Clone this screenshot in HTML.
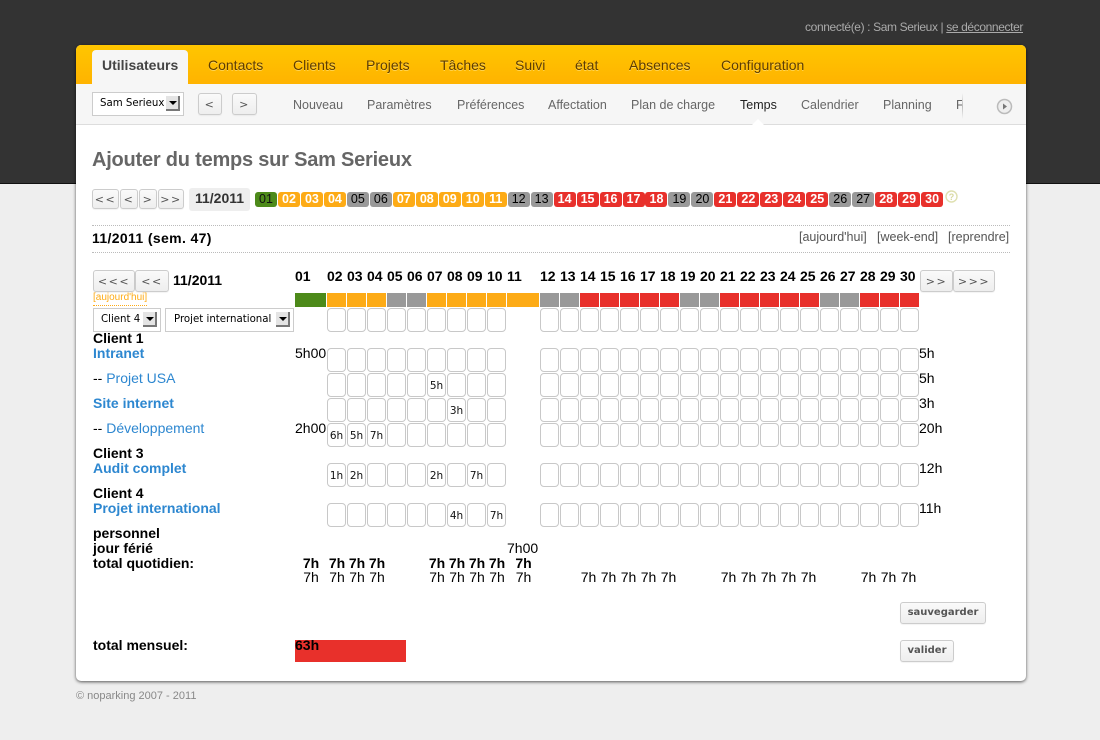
<!DOCTYPE html>
<html lang="fr"><head><meta charset="utf-8"><title>Temps</title>
<style>
html,body{margin:0;padding:0;width:1100px;height:740px;overflow:hidden;background:#eee;font-family:"Liberation Sans",sans-serif;color:#000}
*{box-sizing:border-box}
.top{position:absolute;left:0;top:0;width:1100px;height:184px;background:#333;border-bottom:1px solid #111}
.card{position:absolute;left:76px;top:45px;width:950px;height:636px;background:#fff;border-radius:5px;box-shadow:0 1px 3px rgba(0,0,0,.65)}
.bar{position:absolute;left:76px;top:45px;width:950px;height:39px;border-radius:5px 5px 0 0;background:linear-gradient(#ffc600,#ffb300)}
.sub{position:absolute;left:76px;top:84px;width:950px;height:41px;background:#f6f6f6;border-bottom:1px solid #ddd}
.active{position:absolute;left:92px;top:50px;width:96px;height:34px;background:#f6f6f6;border-radius:4px 4px 0 0}
.t{position:absolute;white-space:nowrap;line-height:16px;font-size:14px}
.b{font-weight:bold}
.tab{color:#5f3d00;text-shadow:0 1px 0 rgba(255,230,140,.6);top:57px}
.nav{color:#666;font-size:12.5px;top:97px}
.blue{color:#2d87d0}
.btn{position:absolute;background:linear-gradient(#fafafa,#eee);border:1px solid #ccc;border-radius:3px;color:#555;font:11px/1 "DejaVu Sans",sans-serif;display:flex;align-items:center;justify-content:center;letter-spacing:1.5px;box-shadow:0 1px 1px rgba(0,0,0,.05)}
.sel{position:absolute;background:#fff;border:1px solid #ccc;font:10.2px/22px "DejaVu Sans",sans-serif;color:#000;white-space:nowrap}
.sel u{position:absolute;right:3px;top:3px;width:14px;height:15px;background:#e4e4e4;border-right:2px solid #777;border-bottom:2px solid #777;text-decoration:none}
.sel u:after{content:"";position:absolute;left:3px;top:5px;border:4px solid transparent;border-top:4px solid #000;border-bottom:0}
.months{position:absolute;left:255px;top:192px;display:flex}
.months span{width:22px;height:15px;margin-right:.97px;border-radius:3px;font:bold 12.5px/15px "Liberation Sans",sans-serif;color:#fff;text-align:center;flex:none}
.months .mo{background:#fdab16}.months .mr{background:#e8302b}
.months .mg{background:#999;color:#000;font-weight:normal}
.months .mv{background:#4d8a1a;color:#111;font-weight:normal}
.dot{position:absolute;left:92px;width:918px;border-top:1px dotted #bbb;height:0}
.g{position:absolute;left:295px;width:625px;display:grid;grid-template-columns:32px repeat(9,20px) 33px repeat(19,20px)}
.bars{top:293px;height:14px}
.bars s{display:block;height:14px;margin-right:1px}
.G{background:#4d8a1a}.O{background:#fdab16}.A{background:#999}.R{background:#e8302b}
.row{height:24px}
.row i{display:block;width:19px;height:24px;border:1px solid #c8c8c8;border-radius:4px;font:normal 10.5px/24px "DejaVu Sans",sans-serif;text-align:center;color:#111}
.row b{display:block}
.hd{top:268px;font-size:14px;font-weight:bold;line-height:16px}
.tot{font-size:14px;line-height:16px;text-align:center}
.tot span{display:block}
</style></head><body>
<div class="top"></div>
<div class="t" style="right:77px;top:19px;font-size:12px;letter-spacing:-.38px;color:#aaa">connecté(e) : Sam Serieux | <span style="text-decoration:underline">se déconnecter</span></div>
<div class="card"></div><div class="bar"></div><div class="sub"></div><div class="active"></div>
<div class="t b" style="left:102px;top:57px;color:#444">Utilisateurs</div>
<div class="t tab" style="left:208px">Contacts</div><div class="t tab" style="left:293px">Clients</div><div class="t tab" style="left:366px">Projets</div><div class="t tab" style="left:440px">Tâches</div><div class="t tab" style="left:515px">Suivi</div><div class="t tab" style="left:575px">état</div><div class="t tab" style="left:629px">Absences</div><div class="t tab" style="left:721px">Configuration</div>

<div class="sel" style="left:92px;top:92px;width:92px;height:24px;padding-left:7px">Sam Serieux<u></u></div>
<div class="btn" style="left:198px;top:93px;width:24px;height:22px">&lt;</div>
<div class="btn" style="left:232px;top:93px;width:25px;height:22px">&gt;</div>
<div class="t nav" style="left:293px">Nouveau</div><div class="t nav" style="left:367px">Paramètres</div><div class="t nav" style="left:457px">Préférences</div><div class="t nav" style="left:548px">Affectation</div><div class="t nav" style="left:631px">Plan de charge</div><div class="t nav" style="left:740px;color:#222">Temps</div><div class="t nav" style="left:801px">Calendrier</div><div class="t nav" style="left:883px">Planning</div>
<div class="t nav" style="left:956px;width:6px;overflow:hidden">Facturation</div>
<div style="position:absolute;left:962px;top:93px;width:1px;height:26px;background:linear-gradient(rgba(190,190,190,0),#bbb 50%,rgba(190,190,190,0))"></div>
<svg style="position:absolute;left:996px;top:98px" width="17" height="17" viewBox="0 0 17 17"><circle cx="8.5" cy="8.5" r="7" fill="#eee" stroke="#bbb" stroke-width="1.5"/><path d="M7 5.5l4 3-4 3z" fill="#777"/></svg>
<div style="position:absolute;left:752px;top:119px;width:0;height:0;border:6px solid transparent;border-top:0;border-bottom:6px solid #fff"></div>

<div class="t b" style="left:92px;top:149px;font-size:20px;line-height:23px;letter-spacing:-.22px;color:#666">Ajouter du temps sur Sam Serieux</div>

<div class="btn" style="left:92px;top:189px;width:27px;height:20px">&lt;&lt;</div>
<div class="btn" style="left:120px;top:189px;width:18px;height:20px">&lt;</div>
<div class="btn" style="left:139px;top:189px;width:18px;height:20px">&gt;</div>
<div class="btn" style="left:158px;top:189px;width:26px;height:20px">&gt;&gt;</div>
<div class="t b" style="left:189px;top:188px;width:61px;height:23px;background:#eee;border-radius:3px;font-size:14px;line-height:21px;text-align:center;color:#333">11/2011</div>
<div class="months"><span class="mv">01</span><span class="mo">02</span><span class="mo">03</span><span class="mo">04</span><span class="mg">05</span><span class="mg">06</span><span class="mo">07</span><span class="mo">08</span><span class="mo">09</span><span class="mo">10</span><span class="mo">11</span><span class="mg">12</span><span class="mg">13</span><span class="mr">14</span><span class="mr">15</span><span class="mr">16</span><span class="mr">17</span><span class="mr">18</span><span class="mg">19</span><span class="mg">20</span><span class="mr">21</span><span class="mr">22</span><span class="mr">23</span><span class="mr">24</span><span class="mr">25</span><span class="mg">26</span><span class="mg">27</span><span class="mr">28</span><span class="mr">29</span><span class="mr">30</span></div>
<svg style="position:absolute;left:945px;top:190px" width="14" height="14" viewBox="0 0 14 14"><circle cx="6.5" cy="6.5" r="5.5" fill="#fff" stroke="#dfe0b0" stroke-width="1.4"/><text x="6.5" y="10" font-size="9" font-weight="bold" text-anchor="middle" fill="#d8d9a0" font-family="Liberation Sans">?</text></svg>

<div class="dot" style="top:225px"></div><div class="dot" style="top:252px"></div>
<div class="t b" style="left:92px;top:230px;letter-spacing:.36px">11/2011 (sem. 47)</div>
<div class="t" style="left:799px;top:229px;font-size:12.5px;color:#555">[aujourd'hui]</div>
<div class="t" style="left:877px;top:229px;font-size:12.5px;color:#555">[week-end]</div>
<div class="t" style="left:948px;top:229px;font-size:12.5px;color:#555">[reprendre]</div>

<div class="btn" style="left:93px;top:270px;width:42px;height:22px">&lt;&lt;&lt;</div>
<div class="btn" style="left:135px;top:270px;width:34px;height:22px">&lt;&lt;</div>
<div class="t b" style="left:173px;top:272px">11/2011</div>
<div class="t" style="left:93px;top:291px;font-size:10px;line-height:14px;color:#fdab16;border-bottom:1px dotted #fdab16;height:15px">[aujourd'hui]</div>
<div class="sel" style="left:93px;top:308px;width:68px;height:24px;padding-left:7px">Client 4<u></u></div>
<div class="sel" style="left:165px;top:308px;width:129px;height:24px;padding-left:8px">Projet international<u></u></div>

<div class="g hd"><span>01</span><span>02</span><span>03</span><span>04</span><span>05</span><span>06</span><span>07</span><span>08</span><span>09</span><span>10</span><span>11</span><span>12</span><span>13</span><span>14</span><span>15</span><span>16</span><span>17</span><span>18</span><span>19</span><span>20</span><span>21</span><span>22</span><span>23</span><span>24</span><span>25</span><span>26</span><span>27</span><span>28</span><span>29</span><span>30</span></div>
<div class="g bars"><s class="G"></s><s class="O"></s><s class="O"></s><s class="O"></s><s class="A"></s><s class="A"></s><s class="O"></s><s class="O"></s><s class="O"></s><s class="O"></s><s class="O"></s><s class="A"></s><s class="A"></s><s class="R"></s><s class="R"></s><s class="R"></s><s class="R"></s><s class="R"></s><s class="A"></s><s class="A"></s><s class="R"></s><s class="R"></s><s class="R"></s><s class="R"></s><s class="R"></s><s class="A"></s><s class="A"></s><s class="R"></s><s class="R"></s><s class="R"></s></div>

<div class="g row" style="top:308px"><b></b><i></i><i></i><i></i><i></i><i></i><i></i><i></i><i></i><i></i><b></b><i></i><i></i><i></i><i></i><i></i><i></i><i></i><i></i><i></i><i></i><i></i><i></i><i></i><i></i><i></i><i></i><i></i><i></i><i></i></div>
<div class="g row" style="top:348px"><b></b><i></i><i></i><i></i><i></i><i></i><i></i><i></i><i></i><i></i><b></b><i></i><i></i><i></i><i></i><i></i><i></i><i></i><i></i><i></i><i></i><i></i><i></i><i></i><i></i><i></i><i></i><i></i><i></i><i></i></div>
<div class="g row" style="top:373px"><b></b><i></i><i></i><i></i><i></i><i></i><i>5h</i><i></i><i></i><i></i><b></b><i></i><i></i><i></i><i></i><i></i><i></i><i></i><i></i><i></i><i></i><i></i><i></i><i></i><i></i><i></i><i></i><i></i><i></i><i></i></div>
<div class="g row" style="top:398px"><b></b><i></i><i></i><i></i><i></i><i></i><i></i><i>3h</i><i></i><i></i><b></b><i></i><i></i><i></i><i></i><i></i><i></i><i></i><i></i><i></i><i></i><i></i><i></i><i></i><i></i><i></i><i></i><i></i><i></i><i></i></div>
<div class="g row" style="top:423px"><b></b><i>6h</i><i>5h</i><i>7h</i><i></i><i></i><i></i><i></i><i></i><i></i><b></b><i></i><i></i><i></i><i></i><i></i><i></i><i></i><i></i><i></i><i></i><i></i><i></i><i></i><i></i><i></i><i></i><i></i><i></i><i></i></div>
<div class="g row" style="top:463px"><b></b><i>1h</i><i>2h</i><i></i><i></i><i></i><i>2h</i><i></i><i>7h</i><i></i><b></b><i></i><i></i><i></i><i></i><i></i><i></i><i></i><i></i><i></i><i></i><i></i><i></i><i></i><i></i><i></i><i></i><i></i><i></i><i></i></div>
<div class="g row" style="top:503px"><b></b><i></i><i></i><i></i><i></i><i></i><i></i><i>4h</i><i></i><i>7h</i><b></b><i></i><i></i><i></i><i></i><i></i><i></i><i></i><i></i><i></i><i></i><i></i><i></i><i></i><i></i><i></i><i></i><i></i><i></i><i></i></div>

<div class="btn" style="left:920px;top:270px;width:33px;height:22px">&gt;&gt;</div>
<div class="btn" style="left:953px;top:270px;width:42px;height:22px">&gt;&gt;&gt;</div>

<div class="t b" style="left:93px;top:330px">Client 1</div>
<div class="t b blue" style="left:93px;top:345px">Intranet</div>
<div class="t" style="left:93px;top:370px">-- <span class="blue">Projet USA</span></div>
<div class="t b blue" style="left:93px;top:395px">Site internet</div>
<div class="t" style="left:93px;top:420px">-- <span class="blue">Développement</span></div>
<div class="t b" style="left:93px;top:445px">Client 3</div>
<div class="t b blue" style="left:93px;top:460px">Audit complet</div>
<div class="t b" style="left:93px;top:485px">Client 4</div>
<div class="t b blue" style="left:93px;top:500px">Projet international</div>
<div class="t b" style="left:93px;top:525px">personnel</div>
<div class="t b" style="left:93px;top:540px">jour férié</div>
<div class="t b" style="left:93px;top:555px">total quotidien:</div>

<div class="t" style="left:295px;top:345px">5h00</div>
<div class="t" style="left:295px;top:420px">2h00</div>
<div class="t" style="left:919px;top:345px">5h</div>
<div class="t" style="left:919px;top:370px">5h</div>
<div class="t" style="left:919px;top:395px">3h</div>
<div class="t" style="left:919px;top:420px">20h</div>
<div class="t" style="left:919px;top:460px">12h</div>
<div class="t" style="left:919px;top:500px">11h</div>
<div class="t" style="left:507px;top:540px">7h00</div>

<div class="g tot b" style="top:555px"><span>7h</span><span>7h</span><span>7h</span><span>7h</span><span></span><span></span><span>7h</span><span>7h</span><span>7h</span><span>7h</span><span>7h</span></div>
<div class="g tot" style="top:569px"><span>7h</span><span>7h</span><span>7h</span><span>7h</span><span></span><span></span><span>7h</span><span>7h</span><span>7h</span><span>7h</span><span>7h</span></div>
<div class="g tot" style="top:569px;left:293.5px"><span></span><span></span><span></span><span></span><span></span><span></span><span></span><span></span><span></span><span></span><span></span><span></span><span></span><span>7h</span><span>7h</span><span>7h</span><span>7h</span><span>7h</span><span></span><span></span><span>7h</span><span>7h</span><span>7h</span><span>7h</span><span>7h</span><span></span><span></span><span>7h</span><span>7h</span><span>7h</span></div>

<div class="btn" style="left:900px;top:602px;width:86px;height:22px;font-weight:bold;font-size:10px;letter-spacing:0">sauvegarder</div>
<div class="btn" style="left:900px;top:640px;width:54px;height:22px;font-weight:bold;font-size:10px;letter-spacing:0">valider</div>
<div class="t b" style="left:93px;top:637px">total mensuel:</div>
<div style="position:absolute;left:295px;top:640px;width:111px;height:22px;background:#e8302b"></div>
<div class="t b" style="left:295px;top:637px">63h</div>
<div class="t" style="left:76px;top:688px;font-size:11px;color:#888">© noparking 2007 - 2011</div>
</body></html>
